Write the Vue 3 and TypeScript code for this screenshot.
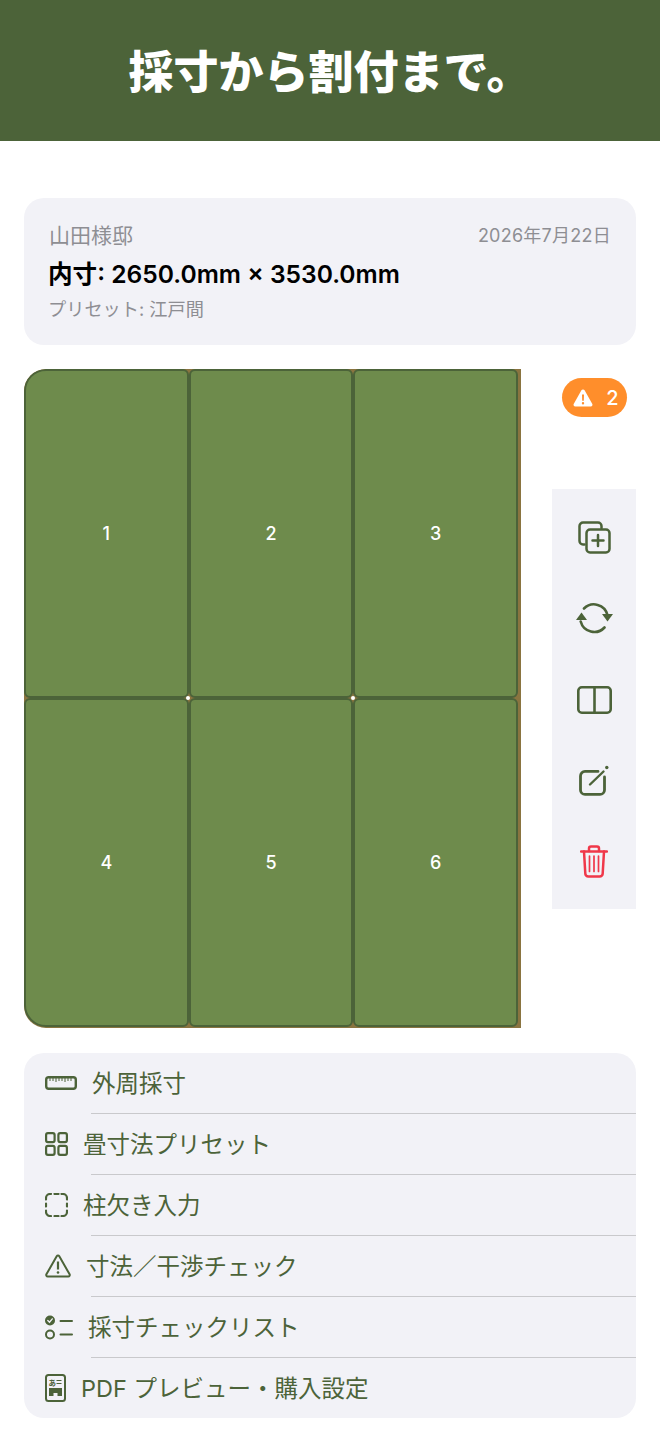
<script setup lang="ts">
const tiles = [1, 2, 3, 4, 5, 6];
const menu = ['外周採寸', '畳寸法プリセット', '柱欠き入力', '寸法／干渉チェック', '採寸チェックリスト', 'PDF プレビュー・購入設定'];
</script>

<template>
  <div class="page">
    <header class="hero">
      <h1>採寸から割付まで。</h1>
    </header>

    <main class="content">
      <section class="info-card">
        <div class="info-top">
          <span class="client">山田様邸</span>
          <span class="date">2026年7月22日</span>
        </div>
        <div class="size">内寸: 2650.0mm × 3530.0mm</div>
        <div class="preset">プリセット: 江戸間</div>
      </section>

      <section class="workspace">
        <div class="room">
          <div v-for="n in tiles" :key="n" class="tile">{{ n }}</div>
          <i class="joint joint-a"></i>
          <i class="joint joint-b"></i>
        </div>

        <aside class="side">
          <div class="badge">
            <svg width="20" height="18" viewBox="0 0 20 18">
              <path d="M10 .6c.8 0 1.300.4 1.700 1l7.600 13.300c.5.900 0 2.500-1.600 2.500H2.300C.7 17.400.2 15.800.7 14.900L8.300 1.600c.4-.6.900-1 1.700-1z" fill="#fff" />
              <path d="M9 5.500h2l-.2 6.300H9.200zM10 13a1.200 1.200 0 1 1 0 2.400A1.200 1.200 0 0 1 10 13z" fill="#ff8e2b" />
            </svg>
            <span>2</span>
          </div>

          <div class="tools">
            <button class="tool" type="button">
              <svg width="33" height="33" viewBox="0 0 33 33" fill="none" stroke="#4c6339" stroke-width="2.500" stroke-linecap="round">
                <path d="M6.500 23.500H5a3.500 3.500 0 0 1-3.500-3.500V5A3.500 3.500 0 0 1 5 1.500h15A3.500 3.500 0 0 1 23.500 5v2" />
                <rect x="8.500" y="8.500" width="23" height="23" rx="3.500" />
                <path d="M20 14v11M14.500 19.500h11" />
              </svg>
            </button>
            <button class="tool tool-sync" type="button">
              <svg width="37" height="32" viewBox="0 0 37 32" fill="none" stroke="#4c6339" stroke-width="2.600" stroke-linecap="round">
                <path d="M31.500 13A14 14 0 0 0 8 6.500" />
                <path d="M4.700 19.500A14 14 0 0 0 28.500 25.500" />
                <path d="M26 12h11l-5.500 7.500z" fill="#4c6339" stroke="none" />
                <path d="M0 18h11L5.500 10.500z" fill="#4c6339" stroke="none" />
              </svg>
            </button>
            <button class="tool" type="button">
              <svg width="35" height="28" viewBox="0 0 35 28" fill="none" stroke="#4c6339" stroke-width="2.600">
                <rect x="1.300" y="1.300" width="32.400" height="25.400" rx="3.500" />
                <path d="M17.500 1.300v25.400" />
              </svg>
            </button>
            <button class="tool" type="button">
              <svg width="30" height="31" viewBox="0 0 30 31" fill="none" stroke="#4c6339" stroke-width="2.800" stroke-linecap="round">
                <path d="M19 6.400H6a4.500 4.500 0 0 0-4.500 4.500v14a4.500 4.500 0 0 0 4.500 4.500h15a4.500 4.500 0 0 0 4.500-4.500V12" />
                <path d="M11 19.500 24.500 6.500" stroke-width="2.400" />
                <circle cx="27.800" cy="2.500" r="1.700" fill="#4c6339" stroke="none" />
              </svg>
            </button>
            <button class="tool" type="button">
              <svg width="28" height="33" viewBox="0 0 28 33" fill="none" stroke="#f0384a" stroke-width="2.500" stroke-linecap="round">
                <path d="M1 6.500h26" />
                <path d="M9 6V3.500A2 2 0 0 1 11 1.500h6a2 2 0 0 1 2 2V6" />
                <path d="M4 6.500 5.300 28.500A3 3 0 0 0 8.300 31.500h11.400a3 3 0 0 0 3-3L24 6.500" />
                <path d="M9.500 11v15.500M14 11v15.500M18.500 11v15.500" stroke-width="1.700" />
              </svg>
            </button>
          </div>
        </aside>
      </section>

      <ul class="menu">
        <li v-for="(label, i) in menu" :key="label" class="menu-row">
          <div class="menu-item">
            <svg v-if="i === 0" width="32" height="14" viewBox="0 0 32 14" fill="none" stroke="#4c6339">
              <rect x="1.200" y="1.200" width="29.600" height="11.600" rx="2.500" stroke-width="2.400" />
              <path d="M5 2v3M8 2v3M11 2v4M14 2v3M17 2v3M20 2v4M23 2v3M26 2v3" stroke-width="1" />
            </svg>
            <svg v-else-if="i === 1" width="23" height="24" viewBox="0 0 23 24" fill="none" stroke="#4c6339" stroke-width="2.200">
              <rect x="1.100" y="1.100" width="8.500" height="9" rx="1.800" />
              <rect x="13.400" y="1.100" width="8.500" height="9" rx="1.800" />
              <rect x="1.100" y="13.900" width="8.500" height="9" rx="1.800" />
              <rect x="13.400" y="13.900" width="8.500" height="9" rx="1.800" />
            </svg>
            <svg v-else-if="i === 2" width="23" height="24" viewBox="0 0 23 24" fill="none" stroke="#4c6339" stroke-width="2.200" stroke-linecap="round">
              <path d="M1 6.500V5a4 4 0 0 1 4-4h1M9.500 1h4M16.500 1H18a4 4 0 0 1 4 4v1.500M22 10.500v3M22 17.500V19a4 4 0 0 1-4 4h-1.500M13.500 23h-4M6 23H5a4 4 0 0 1-4-4v-1.500M1 13.500v-3" />
            </svg>
            <svg v-else-if="i === 3" width="26" height="24" viewBox="0 0 26 24" fill="none" stroke="#4c6339" stroke-width="2" stroke-linejoin="round">
              <path d="M13 1.500c.6 0 1 .3 1.300.8l10.300 18c.5.900-.1 2.200-1.300 2.200H2.700c-1.200 0-1.800-1.300-1.300-2.200l10.300-18c.3-.5.700-.8 1.300-.8z" />
              <path d="M13 7.500v8" stroke-width="2.200" />
              <circle cx="13" cy="18.500" r="1.300" fill="#4c6339" stroke="none" />
            </svg>
            <svg v-else-if="i === 4" width="28" height="25" viewBox="0 0 28 25" fill="none" stroke="#4c6339" stroke-width="2" stroke-linecap="round">
              <circle cx="5" cy="5.500" r="5" fill="#4c6339" stroke="none" />
              <path d="M2.800 5.500 4.500 7.200 7.300 3.900" stroke="#f2f2f7" stroke-width="1.400" />
              <circle cx="5" cy="19.500" r="4" />
              <path d="M15.500 6H27M15.500 19.500H27" />
            </svg>
            <svg v-else width="21" height="28" viewBox="0 0 21 28" fill="none" stroke="#4c6339" stroke-width="2">
              <rect x="1" y="1" width="19" height="26" rx="2.500" />
              <text x="3.500" y="11.500" font-size="7.500" font-family="Noto Sans CJK JP" font-weight="700" fill="#4c6339" stroke="none">あ</text>
              <path d="M11.500 6.500h5M11.500 9.500h5" stroke-width="1.200" />
              <path d="M4 14h13v8h-4.500v-3h-4v3H4z" fill="#4c6339" stroke="none" />
            </svg>
            <span class="menu-label">{{ label }}</span>
          </div>
          <div v-if="i < menu.length - 1" class="menu-sep"></div>
        </li>
      </ul>
    </main>
  </div>
</template>

<style>
body {
  background: #fff;
}
</style>

<style scoped>
.page {
  width: 660px;
  height: 1434px;
  overflow: hidden;
  background: #fff;
  font-family: Inter, "Noto Sans CJK JP", sans-serif;
}

.hero {
  height: 141px;
  background: #4c6339;
  display: flex;
  align-items: center;
  justify-content: center;
}

.hero h1 {
  margin: 0 0 2px;
  color: #fff;
  font-size: 45px;
  font-weight: 900;
  line-height: 1;
  font-family: "Noto Sans CJK JP", sans-serif;
}

.content {
  padding: 57px 24px 0;
}

.info-card {
  height: 147px;
  box-sizing: border-box;
  padding: 23px 25px 0 24px;
  background: #f2f2f7;
  border-radius: 20px;
}

.info-top {
  display: flex;
  align-items: center;
  justify-content: space-between;
  height: 30px;
  margin-top: -2px;
  color: #8e8e93;
}

.client {
  margin-left: 1px;
  font-size: 21px;
}

.date {
  font-size: 18px;
  letter-spacing: 0.25px;
}

.size {
  margin-top: 7px;
  height: 36px;
  line-height: 36px;
  font-size: 24.600px;
  font-weight: 600;
  color: #000;
}

.preset {
  margin-top: 3px;
  height: 28px;
  line-height: 28px;
  font-size: 18.200px;
  color: #8e8e93;
}

.workspace {
  display: flex;
  margin-top: 24px;
  height: 659px;
}

.room {
  position: relative;
  width: 497px;
  height: 659px;
  box-sizing: border-box;
  padding: 0 3px 1px 0;
  display: grid;
  grid-template-columns: repeat(3, 1fr);
  grid-template-rows: repeat(2, 1fr);
  background: #8a7440;
  border-radius: 22px 0 0 22px;
  overflow: hidden;
}

.tile {
  display: flex;
  align-items: center;
  justify-content: center;
  box-sizing: border-box;
  background: #6e8b4c;
  border: 2px solid #4c6339;
  border-radius: 6px;
  color: #fff;
  font-size: 18px;
  font-weight: 500;
}

.tile:first-child {
  border-top-left-radius: 22px;
}

.tile:nth-child(4) {
  border-bottom-left-radius: 22px;
}

.joint {
  position: absolute;
  top: 327px;
  width: 4px;
  height: 4px;
  border-radius: 50%;
  background: #fff;
}

.joint-a {
  left: 162px;
}

.joint-b {
  left: 327px;
}

.side {
  width: 115px;
  display: flex;
  flex-direction: column;
  align-items: flex-end;
}

.badge {
  display: flex;
  align-items: center;
  justify-content: center;
  gap: 13px;
  width: 65px;
  height: 39px;
  box-sizing: border-box;
  padding-left: 3px;
  margin-top: 9px;
  margin-right: 9px;
  background: #ff8e2b;
  border-radius: 20px;
  color: #fff;
  font-size: 20px;
  font-weight: 500;
}

.tools {
  width: 84px;
  height: 420px;
  box-sizing: border-box;
  margin-top: 72px;
  padding: 8px 0 7px;
  background: #f2f2f7;
  display: flex;
  flex-direction: column;
}

.tool {
  height: 81px;
  flex: none;
  padding: 0;
  border: none;
  background: none;
  display: flex;
  align-items: center;
  justify-content: center;
}

.tool-sync svg {
  margin-top: -2px;
}

.menu {
  list-style: none;
  margin: 25px 0 0;
  padding: 0;
  background: #f2f2f7;
  border-radius: 20px;
  overflow: hidden;
}

.menu-item {
  height: 60px;
  padding-left: 21px;
  display: flex;
  align-items: center;
  gap: 15px;
  color: #4c6339;
}

.menu-label {
  margin-top: -2px;
  font-size: 23.500px;
  white-space: nowrap;
}

.menu-sep {
  height: 1px;
  margin-left: 67px;
  background: #c9c9cc;
}
</style>
